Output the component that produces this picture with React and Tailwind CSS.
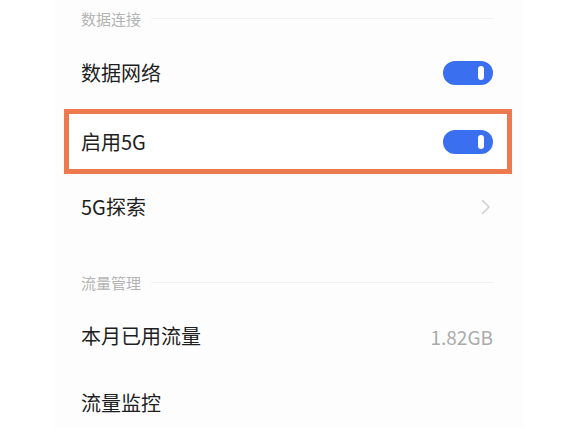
import React from "react";

const font = { fontFamily: '"Noto Sans CJK SC", "Noto Sans", sans-serif' };

function Toggle() {
  return (
    <div className="w-[50px] h-[24px] rounded-full bg-[#3a6ff0] flex items-center justify-end pr-[9px]">
      <div className="w-[6px] h-[14px] rounded-full bg-white" />
    </div>
  );
}

function Header({ text, className = "" }) {
  return (
    <div className={"flex items-center gap-[10px] " + className}>
      <span className="text-[15px] leading-none text-[#b4b4b4]">{text}</span>
      <div className="flex-1 h-px bg-[#f1f1f1]" />
    </div>
  );
}

export default function App() {
  return (
    <div className="w-[569px] h-[428px] bg-white overflow-hidden" style={font}>
      <div className="ml-[55px] w-[468px] h-[428px] bg-[#fdfdfd] pl-[26px] pr-[30px]">
        <Header text="数据连接" className="h-[36px]" />
        <div className="h-[73px] flex items-center justify-between">
          <span className="text-[20px] leading-none text-[#1e1e1e]">数据网络</span>
          <Toggle />
        </div>
        <div className="h-[65px] -ml-[17px] -mr-[19px] border-[5px] border-[#ec7a4e] bg-white pl-[12px] pr-[14px] flex items-center justify-between">
          <span className="text-[20px] leading-none text-[#1e1e1e]">启用5G</span>
          <Toggle />
        </div>
        <div className="h-[66px] flex items-center justify-between">
          <span className="text-[20px] leading-none text-[#1e1e1e]">5G探索</span>
          <svg width="10" height="16" viewBox="0 0 10 16" className="mr-[2px]">
            <path d="M1.5 1.5 L8 8 L1.5 14.5" fill="none" stroke="#cfcfcf" strokeWidth="1.6" strokeLinecap="round" strokeLinejoin="round" />
          </svg>
        </div>
        <Header text="流量管理" className="h-[36px] mt-[24px]" />
        <div className="h-[72px] flex items-center justify-between">
          <span className="text-[20px] leading-none text-[#1e1e1e]">本月已用流量</span>
          <span className="text-[19px] leading-none text-[#ababab]">1.82GB</span>
        </div>
        <div className="h-[62px] flex items-center justify-between">
          <span className="text-[20px] leading-none text-[#1e1e1e]">流量监控</span>
        </div>
      </div>
    </div>
  );
}
